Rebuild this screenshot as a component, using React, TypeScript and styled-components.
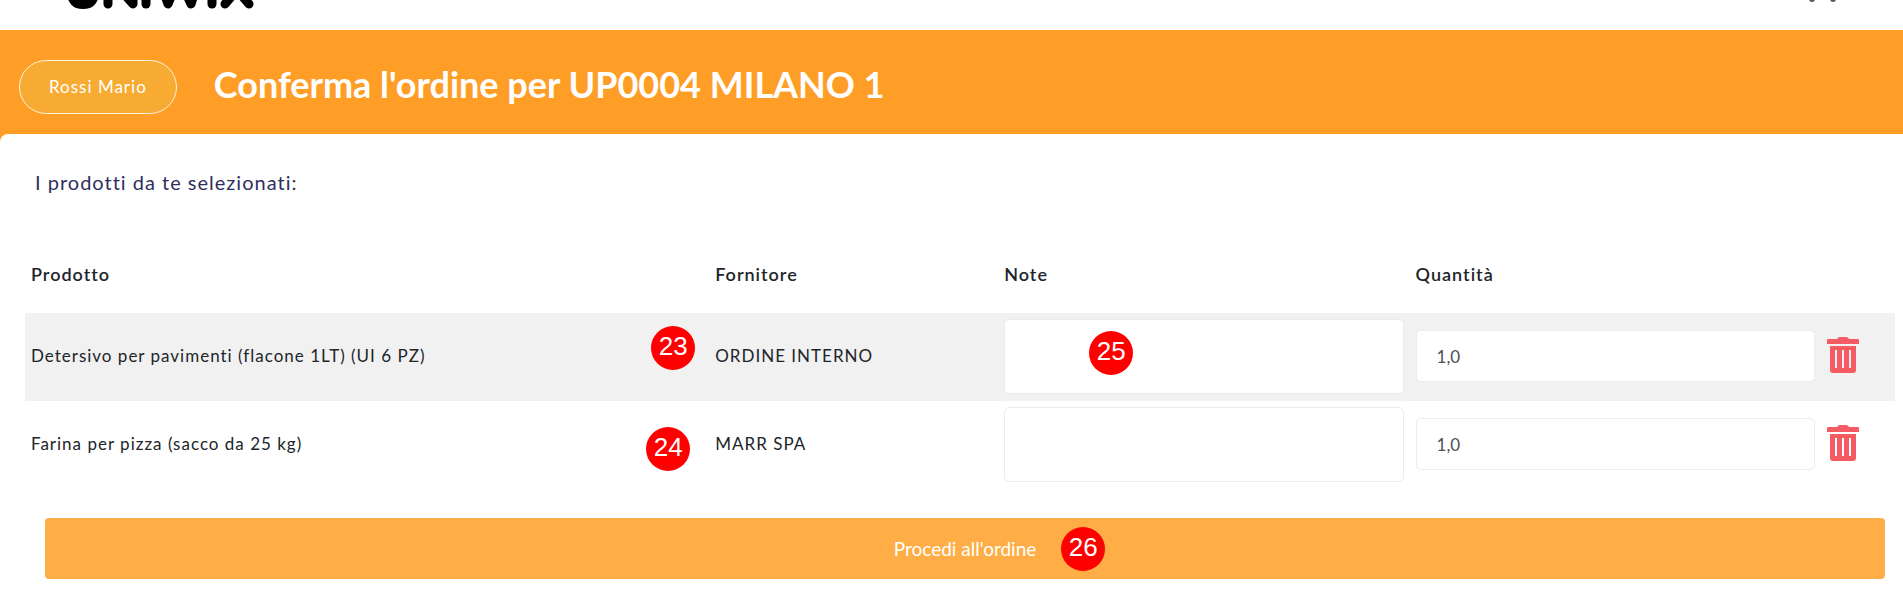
import React from "react";
import styled, { createGlobalStyle } from "styled-components";

const GlobalStyle = createGlobalStyle`
  * { box-sizing: border-box; }
  body {
    margin: 0;
    background: #ffffff;
    color: #212529;
    font-family: Lato, "Liberation Sans", sans-serif;
    font-size: 17px;
    line-height: 28px;
  }
`;

const TopBar = styled.header`
  display: flex;
  justify-content: space-between;
  align-items: flex-end;
  height: 30px;
  padding: 0 64px 20px 67px;
  overflow: hidden;
`;

const Banner = styled.section`
  display: flex;
  align-items: flex-start;
  gap: 37px;
  padding: 30px 19px 20px;
  background: #ff9e27;
`;

const UserButton = styled.button`
  height: 54px;
  padding: 0 29px;
  border: 1px solid #fff3dc;
  border-radius: 27px;
  background: #f8ab32;
  color: #ffffff;
  font: inherit;
  letter-spacing: 1px;
`;

const Title = styled.h1`
  margin: 0;
  color: #ffffff;
  font-size: 36px;
  line-height: 48px;
  font-weight: 700;
`;

const Backdrop = styled.main`
  background: linear-gradient(#ff9e27 20px, #ffffff 20px);
`;

const Card = styled.div`
  padding: 32px 8px 16px 25px;
  border-radius: 8px 0 0 0;
  background: #ffffff;
`;

const Intro = styled.h2`
  margin: 0 0 38px;
  padding: 0 10px;
  color: #2f2f5e;
  font-size: 20px;
  line-height: 32px;
  font-weight: 400;
  letter-spacing: 1px;
`;

const Table = styled.table`
  width: 100%;
  table-layout: fixed;
  border-collapse: collapse;
`;

const SupplierCol = styled.col`
  width: 289px;
`;
const FieldCol = styled.col`
  width: 22%;
`;
const ActionCol = styled.col`
  width: 74px;
`;

const Th = styled.th`
  height: 77px;
  padding: 0 6px 2px;
  font-size: 18px;
  font-weight: 600;
  text-align: left;
  letter-spacing: 1px;
`;

const Row = styled.tr`
  background: #ffffff;
  &:nth-child(odd) { background: #f1f1f1; }
`;

const Td = styled.td`
  position: relative;
  height: 88px;
  padding: 0 6px 2px;
  letter-spacing: 1px;
`;

const NoteArea = styled.textarea`
  display: block;
  width: 100%;
  height: 75px;
  padding: 12px 20px;
  border: 1px solid #ebebf3;
  border-radius: 5px;
  background: #ffffff;
  color: #495057;
  font: inherit;
  resize: none;
`;

const QuantityInput = styled.input`
  display: block;
  width: 100%;
  height: 52px;
  padding: 0 20px;
  border: 1px solid #ebebf3;
  border-radius: 5px;
  background: #ffffff;
  color: #495057;
  font: inherit;
`;

const DeleteButton = styled.button`
  display: block;
  padding: 0 0 2px;
  border: 0;
  background: none;
  color: #f45b62;
  svg { display: block; }
`;

const Actions = styled.div`
  padding: 29px 10px 0 20px;
`;

const ProceedButton = styled.button`
  width: 100%;
  height: 61px;
  border: 0;
  border-radius: 4px;
  background: #ffad46;
  color: #ffffff;
  font: inherit;
  font-size: 19px;
`;

const Anchor = styled.span`
  position: relative;
`;

const Badge = styled.span<{ $top: string; $left?: string; $right?: string }>`
  position: absolute;
  top: ${(p) => p.$top};
  left: ${(p) => p.$left ?? "auto"};
  right: ${(p) => p.$right ?? "auto"};
  width: 44px;
  height: 44px;
  border-radius: 50%;
  background: #ff0000;
  color: #ffffff;
  font-family: "Liberation Sans", Arial, sans-serif;
  font-size: 26px;
  line-height: 40px;
  font-weight: 400;
  letter-spacing: normal;
  text-align: center;
`;

const Logo = () => (
  <svg width="188" height="40" viewBox="0 0 188 40" role="img" aria-label="Uniwix">
    <g fill="none" stroke="#000" strokeWidth="9" strokeLinecap="round" strokeLinejoin="round">
      <path d="M5 5V22Q5 34 16 34Q27 34 27 22V5" strokeWidth="10" />
      <path d="M41 34V6L66 34V6" />
      <path d="M79 34V6" />
      <path d="M91 6L101 34L112 8L124 34L133 6" />
      <path d="M145 34V6" />
      <path d="M158 34L182 6M158 6L182 34" />
    </g>
  </svg>
);

const Cart = () => (
  <svg width="32" height="35" viewBox="0 0 32 35" aria-hidden="true" fill="#55595c">
    <path d="M0 1H5L8 16H27L31 5H7" fill="none" stroke="#55595c" strokeWidth="2" />
    <circle cx="5" cy="24" r="3" />
    <circle cx="26" cy="24" r="3" />
  </svg>
);

const Trash = () => (
  <svg width="32" height="37" viewBox="0 0 32 37" aria-hidden="true" fill="currentColor">
    <path d="M1 2H10Q11 0 13 0H19Q21 0 22 2H31Q32 2 32 3V7H0V3Q0 2 1 2Z" />
    <path
      fillRule="evenodd"
      d="M3 9H29V33Q29 36 26 36H6Q3 36 3 33ZM8 13V31H10V13ZM15 13V31H17V13ZM22 13V31H24V13Z"
    />
  </svg>
);

const rows = [
  {
    product: "Detersivo per pavimenti (flacone 1LT) (UI 6 PZ)",
    supplier: "ORDINE INTERNO",
    step: { label: "23", top: "13px", right: "14px" },
    noteStep: "25",
  },
  {
    product: "Farina per pizza (sacco da 25 kg)",
    supplier: "MARR SPA",
    step: { label: "24", top: "26px", right: "19px" },
  },
];

export default function App() {
  return (
    <>
      <GlobalStyle />
      <TopBar>
        <Logo />
        <Cart />
      </TopBar>
      <Banner>
        <UserButton type="button">Rossi Mario</UserButton>
        <Title>Conferma l'ordine per UP0004 MILANO 1</Title>
      </Banner>
      <Backdrop>
        <Card>
          <Intro>I prodotti da te selezionati:</Intro>
          <Table>
            <colgroup>
              <col />
              <SupplierCol />
              <FieldCol />
              <FieldCol />
              <ActionCol />
            </colgroup>
            <thead>
              <tr>
                <Th scope="col">Prodotto</Th>
                <Th scope="col">Fornitore</Th>
                <Th scope="col">Note</Th>
                <Th scope="col">Quantità</Th>
                <Th as="td" />
              </tr>
            </thead>
            <tbody>
              {rows.map((row) => (
                <Row key={row.product}>
                  <Td>
                    {row.product}
                    <Badge $top={row.step.top} $right={row.step.right}>{row.step.label}</Badge>
                  </Td>
                  <Td>{row.supplier}</Td>
                  <Td>
                    <NoteArea aria-label={`Note: ${row.product}`} />
                    {row.noteStep && <Badge $top="18px" $left="91px">{row.noteStep}</Badge>}
                  </Td>
                  <Td>
                    <QuantityInput type="text" aria-label={`Quantità: ${row.product}`} defaultValue="1,0" />
                  </Td>
                  <Td>
                    <DeleteButton type="button" aria-label={`Elimina ${row.product}`}>
                      <Trash />
                    </DeleteButton>
                  </Td>
                </Row>
              ))}
            </tbody>
          </Table>
          <Actions>
            <ProceedButton type="submit">
              <Anchor>
                Procedi all'ordine
                <Badge $top="-10px" $left="calc(100% + 25px)">26</Badge>
              </Anchor>
            </ProceedButton>
          </Actions>
        </Card>
      </Backdrop>
    </>
  );
}
